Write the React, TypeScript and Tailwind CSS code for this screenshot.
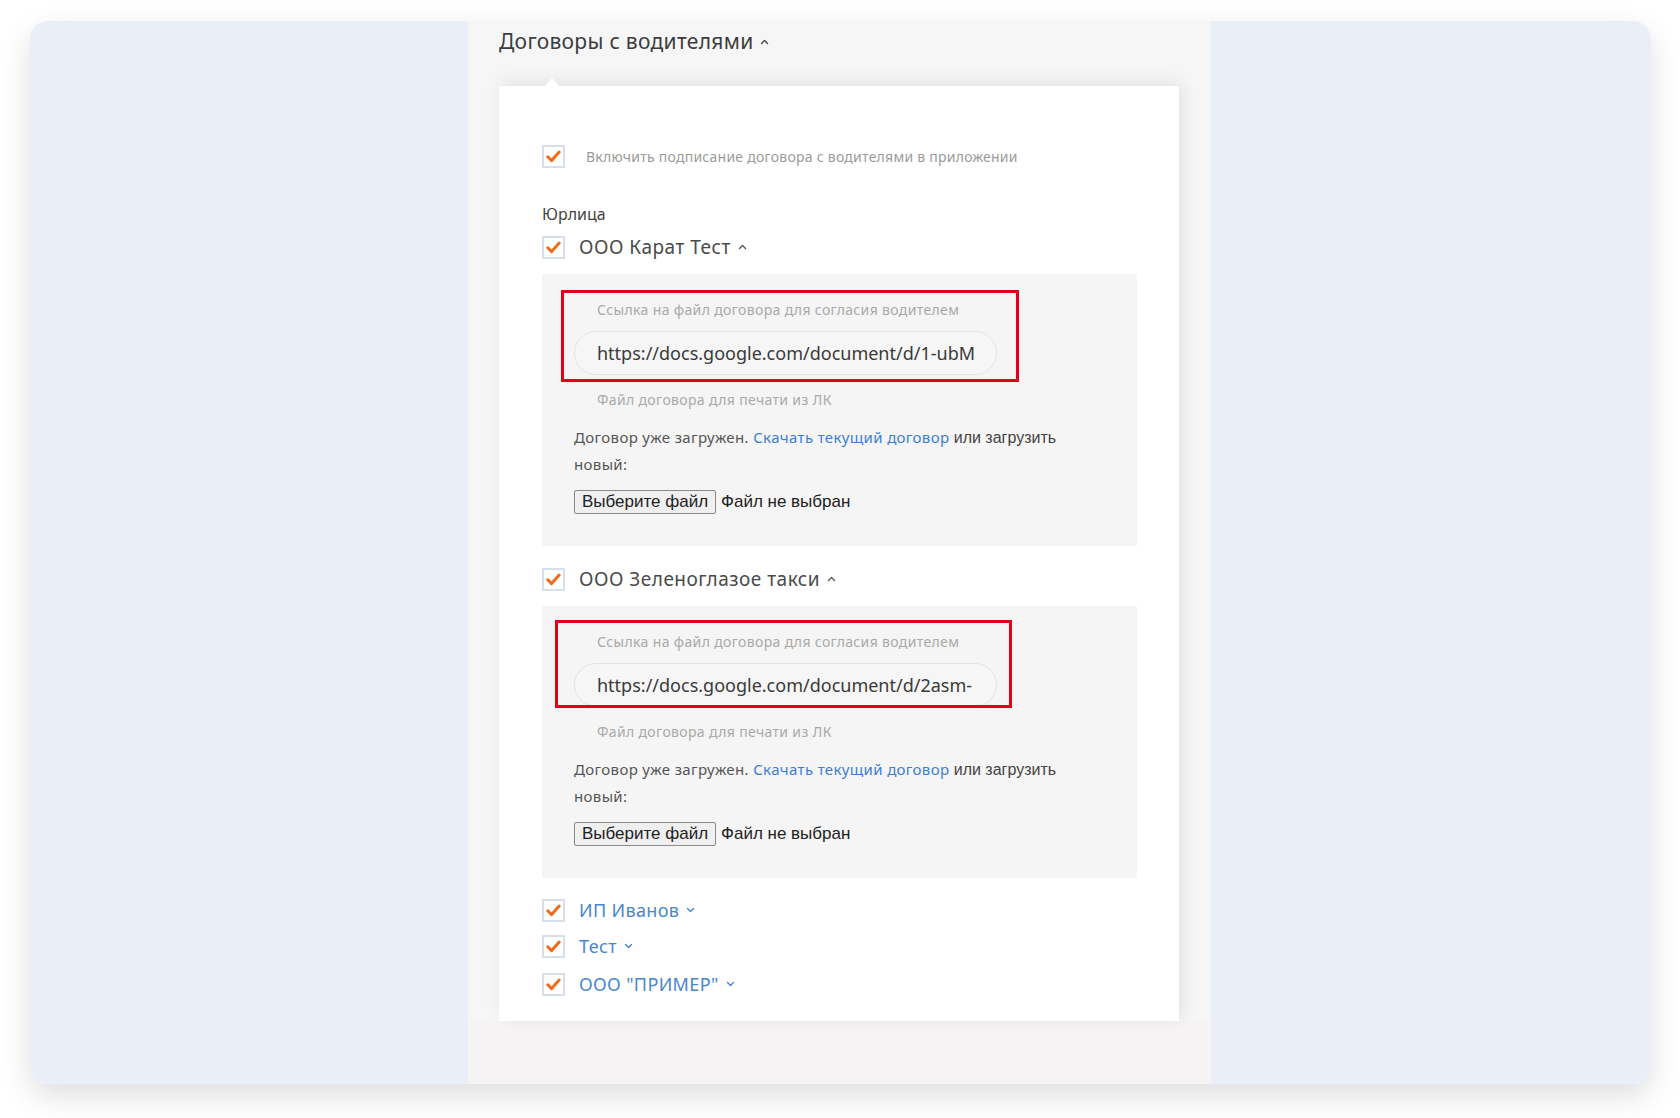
import React from 'react';

const font = { fontFamily: '"Noto Sans", "Open Sans", sans-serif' };
const arial = { fontFamily: '"Liberation Sans", Arial, sans-serif' };

function Check() {
  return (
    <span className="flex h-[23px] w-[23px] shrink-0 items-center justify-center border-2 border-[#d6e0ec] bg-white">
      <svg width="15" height="13" viewBox="0 0 15 13" fill="none">
        <path d="M1.8 6.8 L5.6 10.6 L13.2 2" stroke="#f26b1d" strokeWidth="3" strokeLinecap="round" strokeLinejoin="round" />
      </svg>
    </span>
  );
}

function Caret({ up, color }: { up?: boolean; color: string }) {
  return (
    <svg width="9" height="6" viewBox="0 0 9 6" fill="none" className="ml-[7px]">
      <path d={up ? 'M1.5 4.5 L4.5 1.5 L7.5 4.5' : 'M1.5 1.5 L4.5 4.5 L7.5 1.5'} stroke={color} strokeWidth="1.4" strokeLinecap="round" strokeLinejoin="round" />
    </svg>
  );
}

function Company({ name, open, className = '' }: { name: string; open?: boolean; className?: string }) {
  return (
    <div className={`flex h-[26px] items-center ${className}`}>
      <Check />
      <span
        className={`ml-[14px] leading-[26px] ${
          open ? 'text-[19px] tracking-[0.5px] text-[#4a4a4a]' : 'text-[18px] tracking-[0.35px] text-[#4a86d0]'
        }`}
      >
        {name}
      </span>
      <Caret up={open} color={open ? '#555' : '#4a86d0'} />
    </div>
  );
}

function ContractBox({ url, frame }: { url: string; frame: string }) {
  return (
    <div className="relative mt-[14px] w-[595px] bg-[#f5f5f5] pb-[32px] pl-[32px] pt-[26px]">
      <div className={`pointer-events-none absolute border-[3px] border-[#e3001b] ${frame}`} />
      <div className="pl-[23px] text-[14px] leading-[20px] tracking-[0.35px] text-[#a9a9a9]">Ссылка на файл договора для согласия водителем</div>
      <div className="mt-[11px] flex h-[44px] w-[423px] items-center overflow-hidden whitespace-nowrap rounded-full border border-[#e4e4e4] bg-[#f6f6f6] pl-[22px] pr-[18px] text-[18px] text-[#3a3a3a]">
        {url}
      </div>
      <div className="mt-[15px] pl-[23px] text-[14px] leading-[20px] tracking-[0.35px] text-[#a9a9a9]">Файл договора для печати из ЛК</div>
      <div className="mt-[14px] w-[520px] text-[15px] leading-[27px] tracking-[0.35px] text-[#555]">
        Договор уже загружен. <a className="text-[#3b7fd5]">Скачать текущий договор</a>{' '}
        <span className="text-[16px] tracking-normal text-[#444]" style={arial}>или загрузить</span>
        <br />
        новый:
      </div>
      <div className="mt-[12px] flex h-[24px] items-center" style={arial}>
        <span className="flex h-[24px] w-[142px] items-center justify-center rounded-[2px] border border-[#8a8a8a] bg-[#efefef] text-[17px] text-[#222]">Выберите файл</span>
        <span className="ml-[5px] text-[17px] text-[#222]">Файл не выбран</span>
      </div>
    </div>
  );
}

export default function App() {
  return (
    <div className="h-[1118px] w-[1680px] overflow-hidden bg-white pl-[30px] pt-[21px]" style={font}>
      <div className="flex h-[1063px] w-[1621px] overflow-hidden rounded-[18px] shadow-[0_12px_30px_rgba(0,0,0,0.13)]">
        <div className="w-[438px] bg-[#eaeff7]" />
        <div className="flex w-[743px] flex-col bg-[#f6f6f6]">
          <div className="pl-[31px] pt-[7px]">
            <div className="flex h-[28px] items-center text-[21px] tracking-[0.3px] text-[#3d3d3d]">
              Договоры с водителями
              <Caret up color="#444" />
            </div>
          </div>
          <div className="relative ml-[31px] mt-[30px] h-[935px] w-[680px] bg-white pl-[43px] pt-[59px] shadow-[0_-6px_18px_rgba(0,0,0,0.05),8px_0_14px_rgba(0,0,0,0.04)]">
            <div className="absolute left-[46px] top-[-8px] h-0 w-0 border-x-[7px] border-b-[8px] border-x-transparent border-b-white" />
            <div className="flex h-[23px] items-center">
              <Check />
              <span className="ml-[21px] text-[14px] tracking-[0.25px] text-[#9b9b9b]">Включить подписание договора с водителями в приложении</span>
            </div>
            <div className="mt-[34px] text-[16px] leading-[24px] text-[#444]">Юрлица</div>
            <Company name="ООО Карат Тест" open className="mt-[8px]" />
            <ContractBox url="https://docs.google.com/document/d/1-ubM" frame="left-[19px] top-[16px] h-[92px] w-[458px]" />
            <Company name="ООО Зеленоглазое такси" open className="mt-[20px]" />
            <ContractBox url="https://docs.google.com/document/d/2asm-" frame="left-[13px] top-[14px] h-[88px] w-[457px]" />
            <Company name="ИП Иванов" className="mt-[19px]" />
            <Company name="Тест" className="mt-[10px]" />
            <Company name={'ООО "ПРИМЕР"'} className="mt-[12px]" />
          </div>
          <div className="flex-1 bg-[#f5f3f4]" />
        </div>
        <div className="flex-1 bg-[#eaeff7]" />
      </div>
    </div>
  );
}
